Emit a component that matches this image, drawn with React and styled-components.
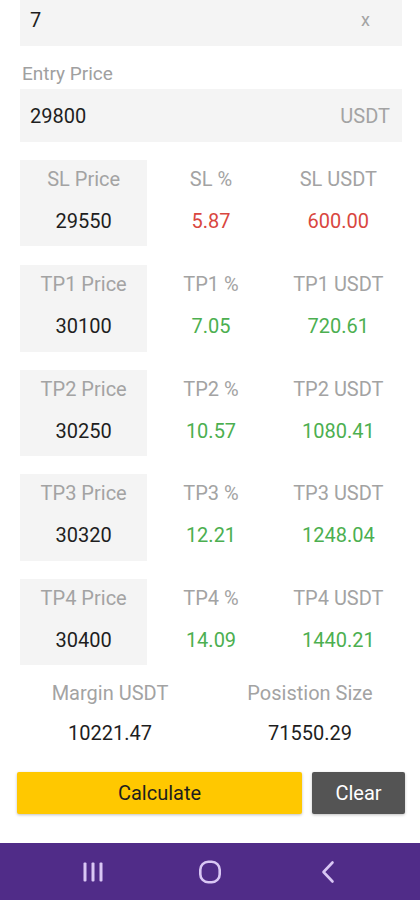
import React from 'react'
import styled, { createGlobalStyle } from 'styled-components'

const GlobalStyle = createGlobalStyle`
    body {
        margin: 0;
        background: #fff;
        font-family: Roboto, "Noto Sans", Arial, sans-serif;
        overflow: hidden;
    }
`;

const Screen = styled.div`
    display: flex;
    flex-direction: column;
    height: 907px;
    margin-top: -7px;
`;

const Content = styled.div`
    flex: 1;
    padding: 0 18px 0 20px;
`;

const Field = styled.div`
    display: flex;
    align-items: center;
    justify-content: space-between;
    height: 53px;
    padding: 0 12px 0 10px;
    background: #f4f4f4;
    font-size: 20px;
    color: #1e1e1e;
`;

const Suffix = styled.span`
    color: #a3a3a3;
    font-size: ${p => p.small ? '18px' : '20px'};
    margin-right: ${p => p.small ? '20px' : '0'};
`;

const FieldLabel = styled.div`
    margin: 16px 0 3px 2px;
    line-height: 24px;
    font-size: 19px;
    color: #a0a0a0;
`;

const Row = styled.div`
    display: grid;
    grid-template-columns: repeat(3, 1fr);
    margin-top: ${p => p.first ? '18px' : p.second ? '19px' : '18px'};
`;

const Cell = styled.div`
    display: flex;
    flex-direction: column;
    align-items: center;
    height: ${p => p.tall ? '86.5px' : '86px'};
    box-sizing: border-box;
    padding-top: 7px;
    background: ${p => p.shaded ? '#f4f4f4' : 'transparent'};
`;

const Label = styled.div`
    line-height: 24px;
    font-size: 20px;
    color: #a3a3a3;
`;

const Value = styled.div`
    margin-top: 18px;
    line-height: 24px;
    font-size: 20px;
    color: ${p => p.tone === 'red' ? '#d9473f' : p.tone === 'green' ? '#4caf50' : '#1e1e1e'};
`;

const Summary = styled.div`
    display: grid;
    grid-template-columns: 1fr 1fr;
    margin: 16px -8px 0 -10px;
`;

const SummaryCell = styled.div`
    display: flex;
    flex-direction: column;
    align-items: center;
`;

const SummaryValue = styled(Value)`
    margin-top: 16px;
`;

const Buttons = styled.div`
    display: flex;
    gap: 10px;
    margin: 27px -3px 0 -3px;
`;

const Button = styled.button`
    flex: ${p => p.primary ? '1' : '0 0 93px'};
    height: 42px;
    border: none;
    border-radius: 2px;
    font-family: inherit;
    font-size: 20px;
    background: ${p => p.primary ? '#ffc800' : '#545454'};
    color: ${p => p.primary ? '#1e1e1e' : '#fff'};
    box-shadow: 0 1px 3px rgba(0, 0, 0, 0.25);
`;

const NavBar = styled.div`
    display: grid;
    grid-template-columns: repeat(3, 1fr);
    align-items: center;
    justify-items: center;
    height: 57px;
    padding: 0 34px;
    background: #502c88;
`;

const NavIcon = styled.svg`
    width: 24px;
    height: 24px;
    color: #d9c7f4;
`;

const rows = [
    { name: 'SL', price: '29550', pct: '5.87', usdt: '600.00', tone: 'red' },
    { name: 'TP1', price: '30100', pct: '7.05', usdt: '720.61', tone: 'green' },
    { name: 'TP2', price: '30250', pct: '10.57', usdt: '1080.41', tone: 'green' },
    { name: 'TP3', price: '30320', pct: '12.21', usdt: '1248.04', tone: 'green' },
    { name: 'TP4', price: '30400', pct: '14.09', usdt: '1440.21', tone: 'green' },
];

function App() {
    return (
        <Screen>
            <GlobalStyle />
            <Content>
                <Field>
                    <span>7</span>
                    <Suffix small>x</Suffix>
                </Field>
                <FieldLabel>Entry Price</FieldLabel>
                <Field>
                    <span>29800</span>
                    <Suffix>USDT</Suffix>
                </Field>

                {rows.map((r, i) => (
                    <Row key={r.name} first={i === 0} second={i === 1}>
                        <Cell shaded tall={i > 0}>
                            <Label>{r.name} Price</Label>
                            <Value>{r.price}</Value>
                        </Cell>
                        <Cell tall={i > 0}>
                            <Label>{r.name} %</Label>
                            <Value tone={r.tone}>{r.pct}</Value>
                        </Cell>
                        <Cell tall={i > 0}>
                            <Label>{r.name} USDT</Label>
                            <Value tone={r.tone}>{r.usdt}</Value>
                        </Cell>
                    </Row>
                ))}

                <Summary>
                    <SummaryCell>
                        <Label>Margin USDT</Label>
                        <SummaryValue>10221.47</SummaryValue>
                    </SummaryCell>
                    <SummaryCell>
                        <Label>Posistion Size</Label>
                        <SummaryValue>71550.29</SummaryValue>
                    </SummaryCell>
                </Summary>

                <Buttons>
                    <Button primary>Calculate</Button>
                    <Button>Clear</Button>
                </Buttons>
            </Content>

            <NavBar>
                <NavIcon viewBox="0 0 24 24">
                    <rect x="2.5" y="2.5" width="3" height="19" rx="1" fill="currentColor" />
                    <rect x="10.5" y="2.5" width="3" height="19" rx="1" fill="currentColor" />
                    <rect x="18.5" y="2.5" width="3" height="19" rx="1" fill="currentColor" />
                </NavIcon>
                <NavIcon viewBox="0 0 24 24">
                    <rect x="2.3" y="1.8" width="19.4" height="20.4" rx="8" fill="none" stroke="currentColor" strokeWidth="2.6" />
                </NavIcon>
                <NavIcon viewBox="0 0 24 24">
                    <path d="M17.5 2.5 L8.5 12 L17.5 21.5" fill="none" stroke="currentColor" strokeWidth="2.6" strokeLinecap="round" strokeLinejoin="round" />
                </NavIcon>
            </NavBar>
        </Screen>
    )
}

export default App
